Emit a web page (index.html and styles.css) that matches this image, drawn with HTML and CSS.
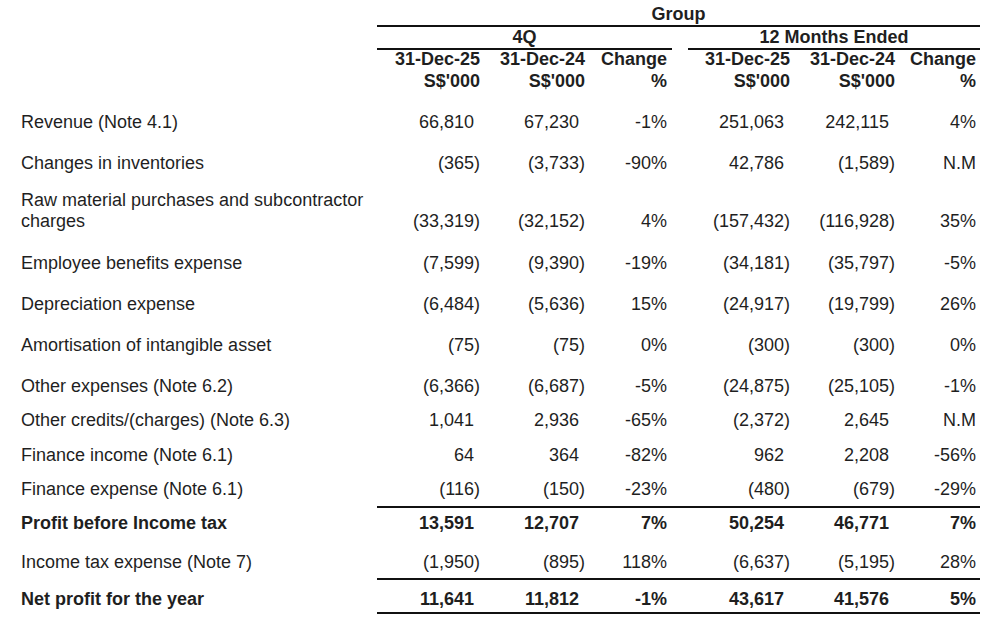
FILE: index.html
```html
<!DOCTYPE html>
<html lang="en">
<head>
<meta charset="utf-8">
<title>Group Income Statement</title>
<link rel="stylesheet" href="styles.css">
</head>
<body>
<table class="fin">
  <colgroup>
    <col class="c-label"><col class="c-n1"><col class="c-n2"><col class="c-ch"><col class="c-gap"><col class="c-n4"><col class="c-n5"><col class="c-ch6">
  </colgroup>
  <tr class="h-group"><td class="label"></td><th colspan="7">Group</th></tr>
  <tr class="h-period"><td class="label"></td><th colspan="3">4Q</th><td class="gap"></td><th colspan="3">12 Months Ended</th></tr>
  <tr class="h-date cols"><td class="label"></td><th>31-Dec-25</th><th>31-Dec-24</th><th>Change</th><td class="gap"></td><th>31-Dec-25</th><th>31-Dec-24</th><th>Change</th></tr>
  <tr class="h-unit cols"><td class="label"></td><th>S$'000</th><th>S$'000</th><th>%</th><td class="gap"></td><th>S$'000</th><th>S$'000</th><th>%</th></tr>

  <tr class="data cols pt22"><td class="label">Revenue (Note 4.1)</td><td><span class="p">66,810</span></td><td><span class="p">67,230</span></td><td>-1%</td><td class="gap"></td><td><span class="p">251,063</span></td><td><span class="p">242,115</span></td><td>4%</td></tr>
  <tr class="data cols pt20"><td class="label">Changes in inventories</td><td>(365)</td><td>(3,733)</td><td>-90%</td><td class="gap"></td><td><span class="p">42,786</span></td><td>(1,589)</td><td>N.M</td></tr>
  <tr class="data cols pt16"><td class="label">Raw material purchases and subcontractor charges</td><td>(33,319)</td><td>(32,152)</td><td>4%</td><td class="gap"></td><td>(157,432)</td><td>(116,928)</td><td>35%</td></tr>
  <tr class="data cols pt21"><td class="label">Employee benefits expense</td><td>(7,599)</td><td>(9,390)</td><td>-19%</td><td class="gap"></td><td>(34,181)</td><td>(35,797)</td><td>-5%</td></tr>
  <tr class="data cols pt20"><td class="label">Depreciation expense</td><td>(6,484)</td><td>(5,636)</td><td>15%</td><td class="gap"></td><td>(24,917)</td><td>(19,799)</td><td>26%</td></tr>
  <tr class="data cols pt20"><td class="label">Amortisation of intangible asset</td><td>(75)</td><td>(75)</td><td>0%</td><td class="gap"></td><td>(300)</td><td>(300)</td><td>0%</td></tr>
  <tr class="data cols pt20"><td class="label">Other expenses (Note 6.2)</td><td>(6,366)</td><td>(6,687)</td><td>-5%</td><td class="gap"></td><td>(24,875)</td><td>(25,105)</td><td>-1%</td></tr>
  <tr class="data cols pt13"><td class="label">Other credits/(charges) (Note 6.3)</td><td><span class="p">1,041</span></td><td><span class="p">2,936</span></td><td>-65%</td><td class="gap"></td><td>(2,372)</td><td><span class="p">2,645</span></td><td>N.M</td></tr>
  <tr class="data cols pt14"><td class="label">Finance income (Note 6.1)</td><td><span class="p">64</span></td><td><span class="p">364</span></td><td>-82%</td><td class="gap"></td><td><span class="p">962</span></td><td><span class="p">2,208</span></td><td>-56%</td></tr>
  <tr class="data cols pt13 pb6 rule"><td class="label">Finance expense (Note 6.1)</td><td>(116)</td><td>(150)</td><td>-23%</td><td class="gap"></td><td>(480)</td><td>(679)</td><td>-29%</td></tr>
  <tr class="data cols pt5 total"><td class="label">Profit before Income tax</td><td><span class="p">13,591</span></td><td><span class="p">12,707</span></td><td>7%</td><td class="gap"></td><td><span class="p">50,254</span></td><td><span class="p">46,771</span></td><td>7%</td></tr>
  <tr class="data cols pt18 pb5 rule"><td class="label">Income tax expense (Note 7)</td><td>(1,950)</td><td>(895)</td><td>118%</td><td class="gap"></td><td>(6,637)</td><td>(5,195)</td><td>28%</td></tr>
  <tr class="data cols pt9 pb2 rule total"><td class="label">Net profit for the year</td><td><span class="p">11,641</span></td><td><span class="p">11,812</span></td><td>-1%</td><td class="gap"></td><td><span class="p">43,617</span></td><td><span class="p">41,576</span></td><td>5%</td></tr>
</table>
</body>
</html>
```

FILE: styles.css
```css
html, body {
  margin: 0;
  padding: 0;
  background: #ffffff;
}

body {
  color: #1f1f1f;
  font-family: "Liberation Sans", Arial, sans-serif;
  font-size: 18px;
}

.fin {
  border-collapse: separate;
  border-spacing: 0;
  table-layout: fixed;
  width: 980px;
}

.c-label { width: 377px; }
.c-n1 { width: 105px; }
.c-n2 { width: 105px; }
.c-ch { width: 85px; }
.c-gap { width: 16px; }
.c-n4 { width: 104px; }
.c-n5 { width: 105px; }
.c-ch6 { width: 83px; }

.fin td,
.fin th {
  padding: 0;
  line-height: 21px;
  text-align: right;
  vertical-align: bottom;
  white-space: nowrap;
  font-weight: normal;
}

.fin th {
  font-weight: bold;
}

.fin .label {
  text-align: left;
  vertical-align: top;
  padding-left: 21px;
  white-space: normal;
}

/* right insets per column */
.fin .cols > :nth-child(2) { padding-right: 2px; }
.fin .cols > :nth-child(3) { padding-right: 2px; }
.fin .cols > :nth-child(4) { padding-right: 5px; }
.fin .cols > :nth-child(6) { padding-right: 2px; }
.fin .cols > :nth-child(7) { padding-right: 2px; }
.fin .cols > :nth-child(8) { padding-right: 4px; }

/* header */
.fin .h-group th {
  text-align: center;
  padding-top: 4px;
  border-bottom: 2px solid #111;
}

.fin .h-period th {
  text-align: center;
  border-bottom: 2px solid #111;
}

.fin .h-date > *,
.fin .h-unit > * {
  line-height: 18px;
}

.fin .h-unit > * {
  padding-top: 4px;
}

/* data rows */
.fin .pt5 > * { padding-top: 5px; }
.fin .pt9 > * { padding-top: 9px; }
.fin .pt13 > * { padding-top: 13px; }
.fin .pt14 > * { padding-top: 14px; }
.fin .pt16 > * { padding-top: 16px; }
.fin .pt18 > * { padding-top: 18px; }
.fin .pt20 > * { padding-top: 20px; }
.fin .pt21 > * { padding-top: 21px; }
.fin .pt22 > * { padding-top: 22px; }

.fin .pb2 > * { padding-bottom: 2px; }
.fin .pb5 > * { padding-bottom: 5px; }
.fin .pb6 > * { padding-bottom: 6px; }

.fin .rule > :not(.label) {
  border-bottom: 2px solid #111;
}

.fin .total > * {
  font-weight: bold;
}

.p {
  padding-right: 6px;
}
```
